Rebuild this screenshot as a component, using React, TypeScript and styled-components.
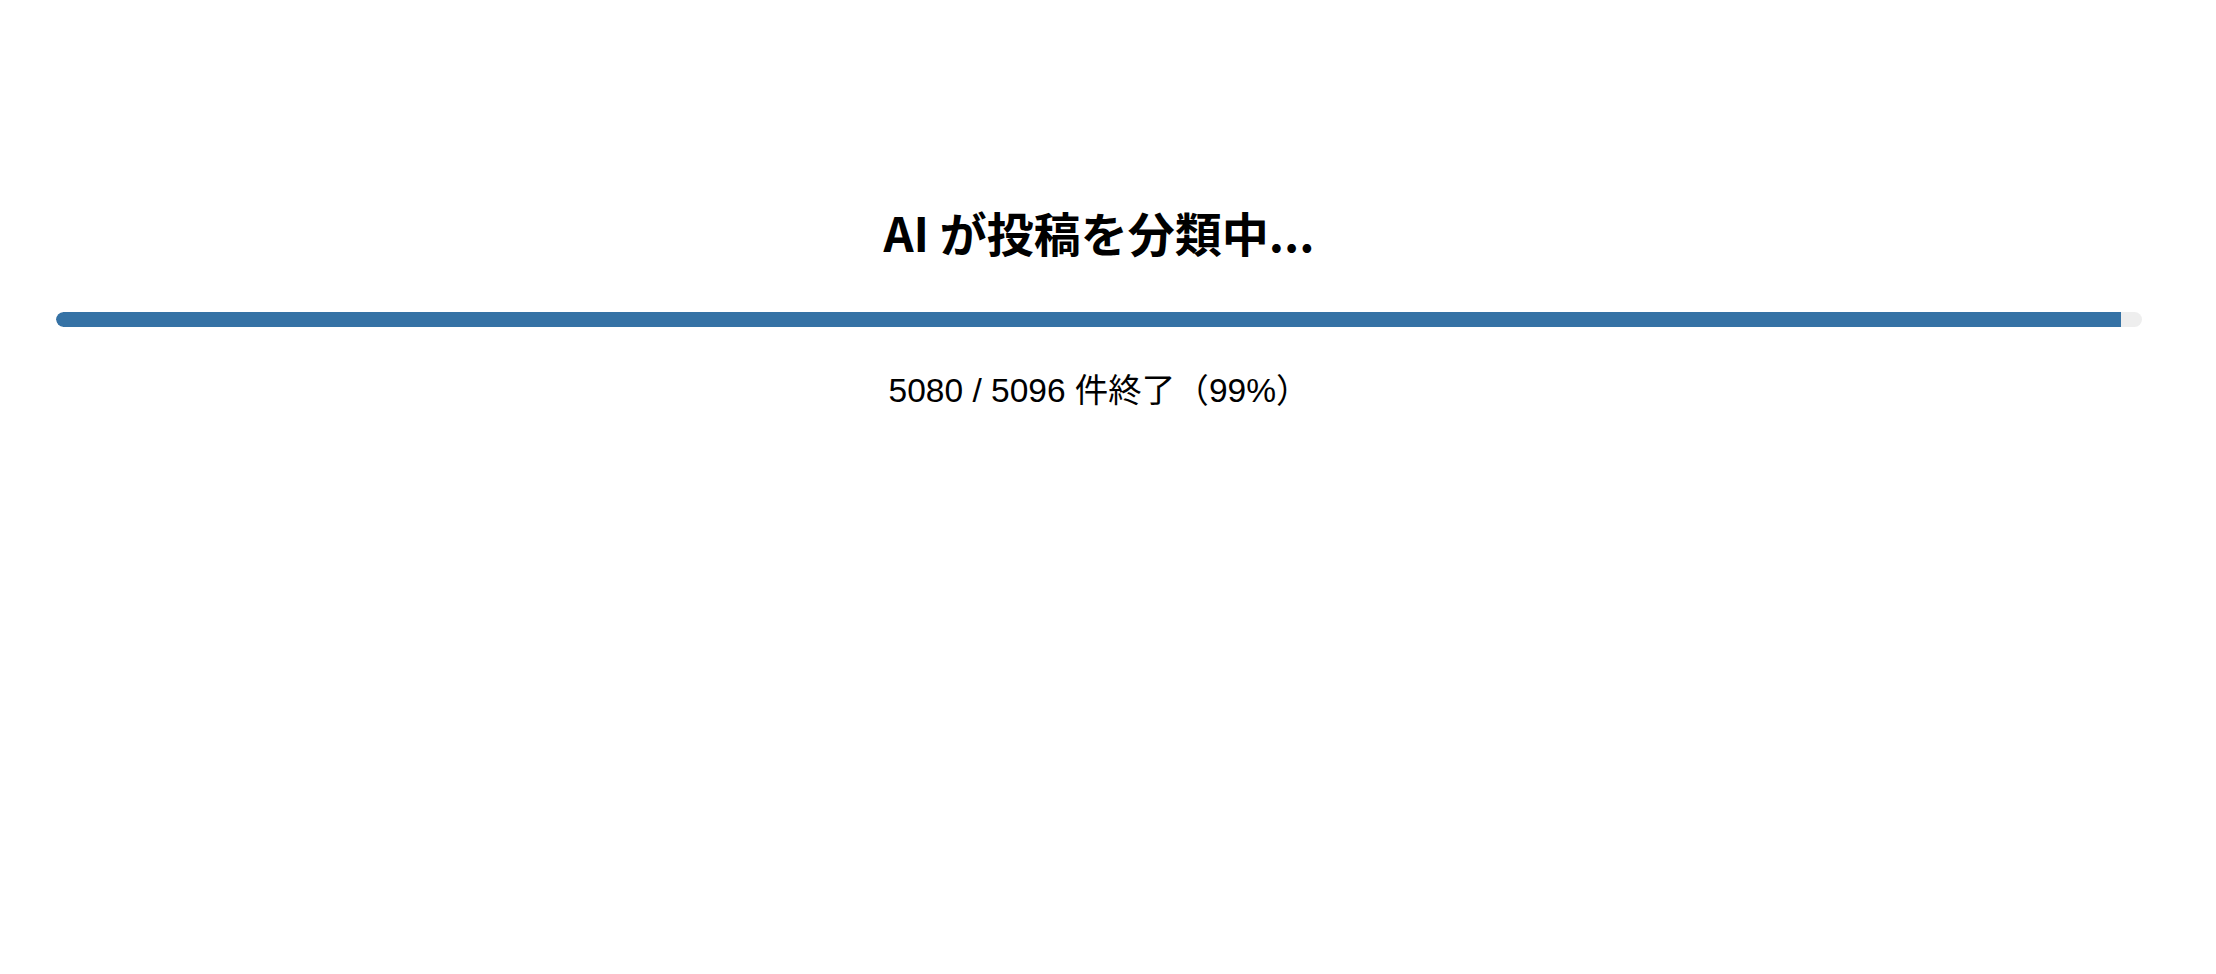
import styled, { createGlobalStyle } from "styled-components";

const GlobalStyle = createGlobalStyle`
  body {
    margin: 0;
    background: #ffffff;
    font-family: "Liberation Sans", "Noto Sans CJK JP", sans-serif;
    color: #000000;
  }
`;

const Root = styled.div`
  display: flex;
  flex-direction: column;
  align-items: center;
  padding: 196px 74px 0 56px;
`;

const Title = styled.h1`
  margin: 0;
  font-family: "Noto Sans CJK JP", sans-serif;
  font-size: 47px;
  font-weight: 700;
  line-height: 72px;
  text-align: center;
`;

const Track = styled.div`
  width: 100%;
  height: 15px;
  margin-top: 44px;
  background: #eeeeee;
  border-radius: 8px;
  overflow: hidden;
`;

const Fill = styled.div`
  height: 100%;
  background: #3572a5;
  border-radius: 8px 0 0 8px;
`;

const Status = styled.p`
  margin: 44px 0 0;
  font-size: 33.5px;
  line-height: 40px;
  text-align: center;
`;

const done = 5080;
const total = 5096;
const percent = Math.floor((done / total) * 100);

const App = () => (
  <>
    <GlobalStyle />
    <Root>
      <Title>AI が投稿を分類中...</Title>
      <Track>
        <Fill style={{ width: `${percent}%` }} />
      </Track>
      <Status>
        {done} / {total} 件終了（{percent}%）
      </Status>
    </Root>
  </>
);

export default App;
